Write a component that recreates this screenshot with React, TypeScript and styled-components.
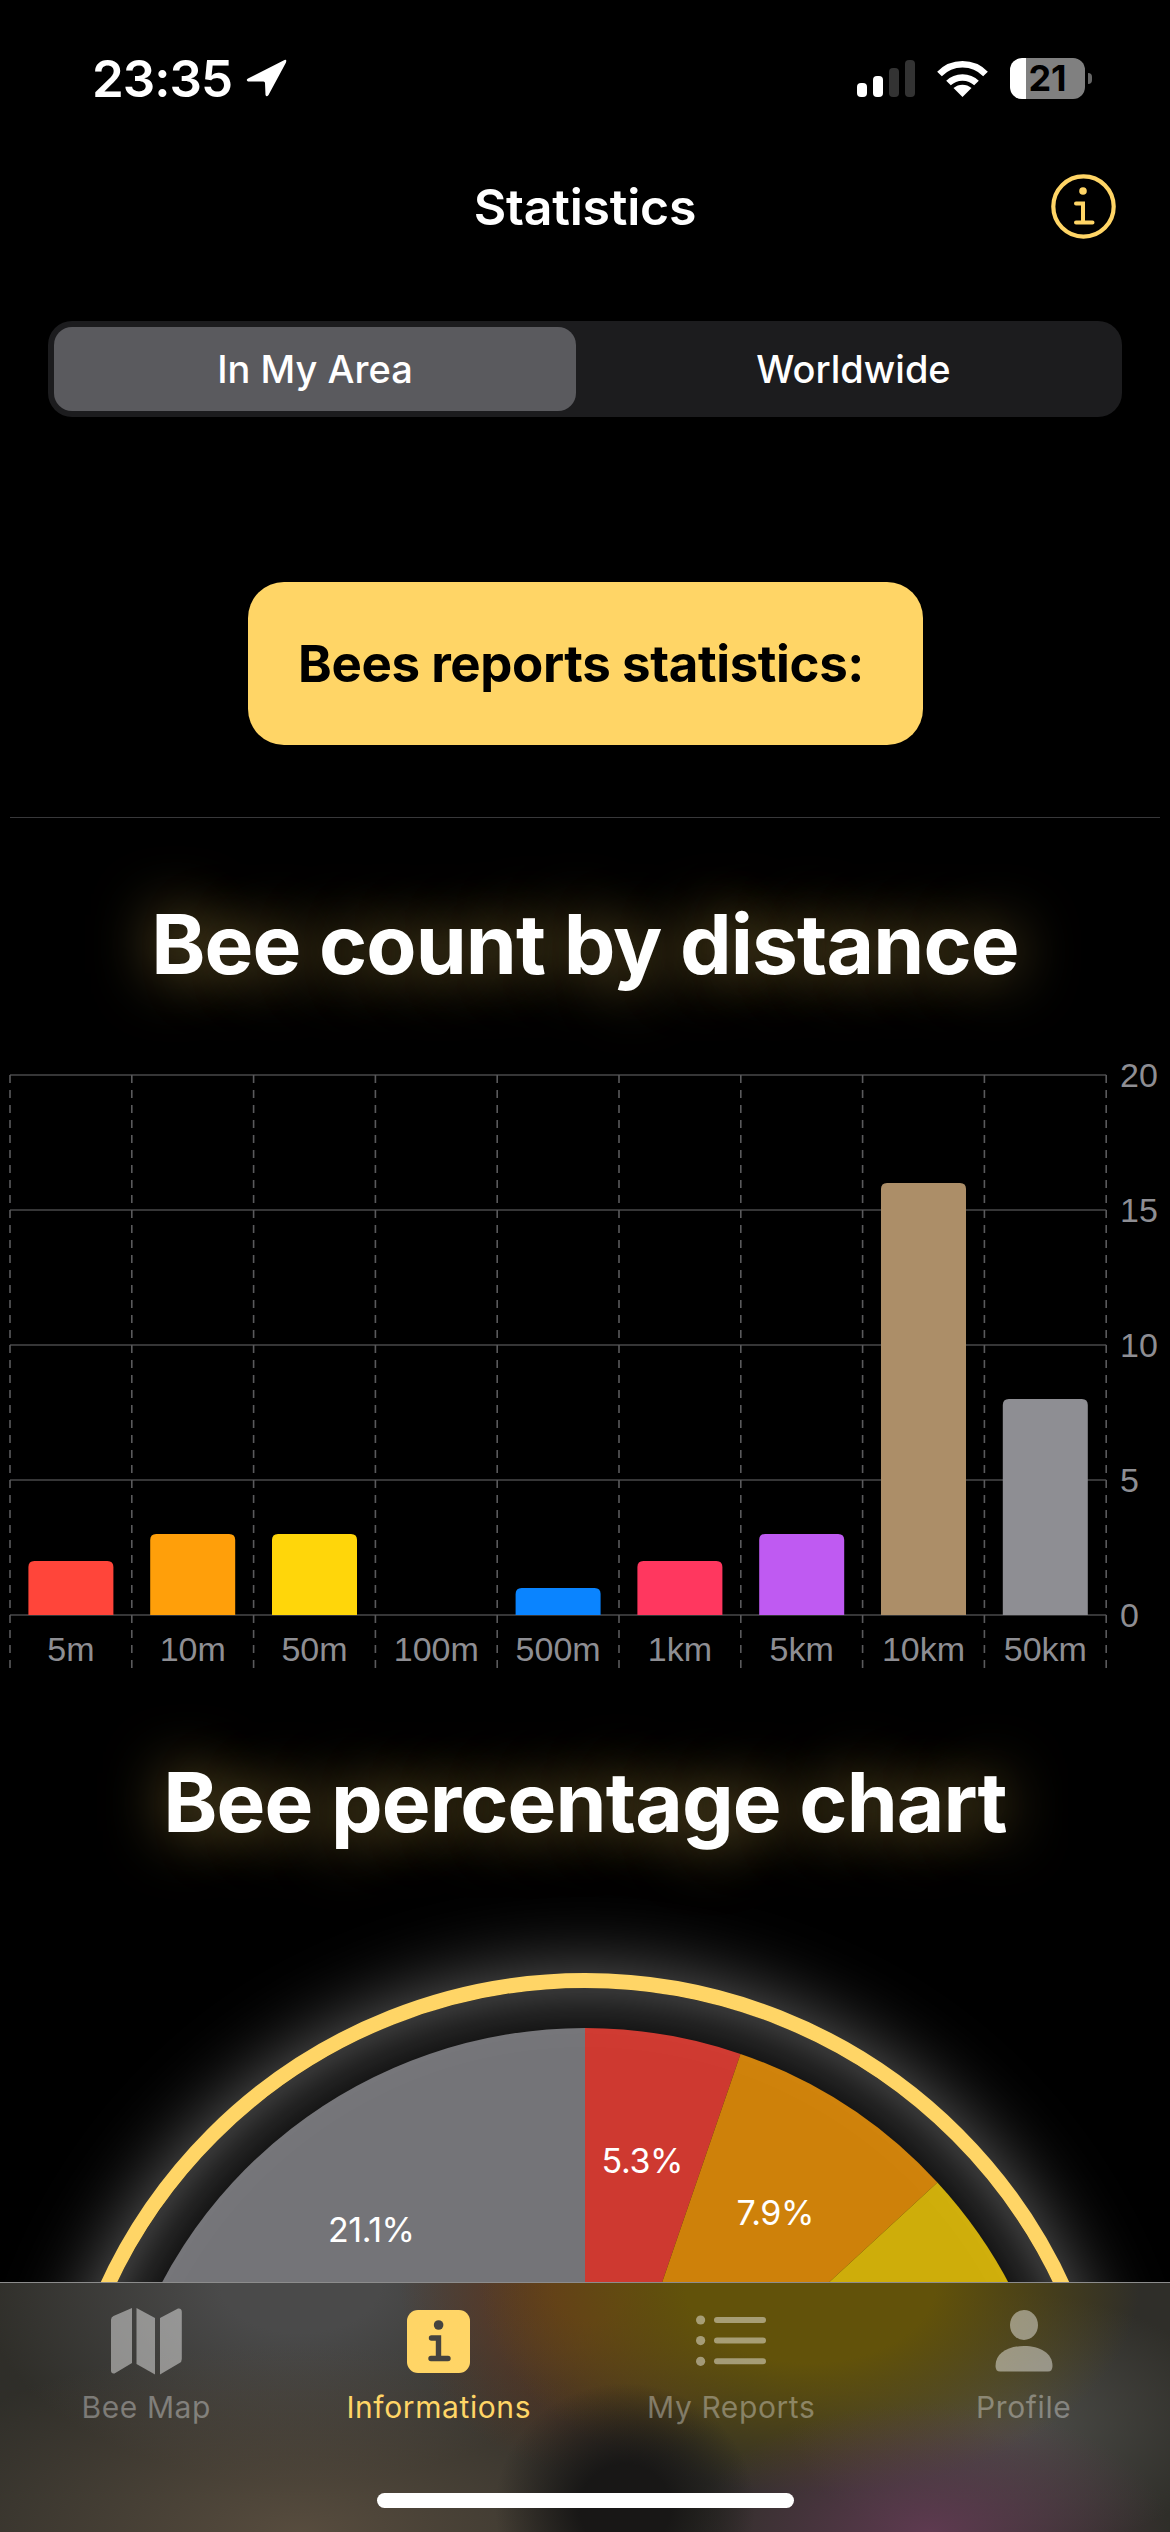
import React, { FC } from 'react';
import styled, { createGlobalStyle } from 'styled-components';

const GlobalStyle = createGlobalStyle`
    html, body {
        margin: 0;
        padding: 0;
        background: #000;
    }
    body {
        font-family: Inter, "Noto Sans", sans-serif;
        -webkit-font-smoothing: antialiased;
    }
`;

const YELLOW = '#ffd566';

const REPORTS = [
    { label: '5m', count: 2, color: '#ff453a' },
    { label: '10m', count: 3, color: '#ff9f0a' },
    { label: '50m', count: 3, color: '#ffd60a' },
    { label: '100m', count: 0, color: '#30d158' },
    { label: '500m', count: 1, color: '#0a84ff' },
    { label: '1km', count: 2, color: '#ff375f' },
    { label: '5km', count: 3, color: '#bf5af2' },
    { label: '10km', count: 16, color: '#ac8e68' },
    { label: '50km', count: 8, color: '#8e8e93' },
];

const Page = styled.div`
    position: relative;
    width: 1170px;
    height: 2532px;
    overflow: hidden;
    background: #000;
    color: #fff;
`;

const StatusBar = styled.div`
    height: 156px;
    display: flex;
    align-items: center;
    justify-content: space-between;
    padding: 0 85px 0 92px;
    box-sizing: border-box;
`;

const StatusGroup = styled.div<{ $gap: number }>`
    display: flex;
    align-items: center;
    gap: ${(p) => p.$gap}px;
`;

const Clock = styled.span`
    font-size: 51px;
    font-weight: 600;
    letter-spacing: -1px;
    line-height: 1;
`;

const Battery = styled.div`
    position: relative;
    width: 75px;
    height: 41px;
    border-radius: 12px;
    background: linear-gradient(to right, #fff 16px, #808080 16px);
    color: #000;
    font-size: 36px;
    font-weight: 700;
    line-height: 41px;
    text-align: center;

    &::after {
        content: '';
        position: absolute;
        left: 78px;
        top: 15px;
        width: 4px;
        height: 11px;
        border-radius: 0 4px 4px 0;
        background: #666;
    }
`;

const Header = styled.div`
    position: relative;
    height: 102px;
    display: flex;
    align-items: center;
    justify-content: center;
`;

const HeaderTitle = styled.h1`
    margin: 0;
    font-size: 50px;
    font-weight: 600;
    letter-spacing: -0.2px;
`;

const InfoButton = styled.svg`
    position: absolute;
    left: 1051px;
    top: 18px;
`;

const Segment = styled.div`
    margin: 63px 48px 0;
    height: 96px;
    display: grid;
    grid-template-columns: 1fr 1fr;
    border-radius: 24px;
    background: #1c1c1e;
`;

const SegmentOption = styled.div<{ $active?: boolean }>`
    display: flex;
    align-items: center;
    justify-content: center;
    margin: ${(p) => (p.$active ? '6px 9px 6px 6px' : '0')};
    border-radius: 18px;
    background: ${(p) => (p.$active ? '#5a5a5e' : 'transparent')};
    font-size: 38px;
    font-weight: 500;
`;

const Banner = styled.div`
    width: 675px;
    height: 163px;
    margin: 165px auto 0;
    padding-right: 8px;
    box-sizing: border-box;
    display: flex;
    align-items: center;
    justify-content: center;
    border-radius: 36px;
    background: ${YELLOW};
    color: #000;
    font-size: 51px;
    font-weight: 700;
    letter-spacing: -0.4px;
`;

const Divider = styled.div`
    height: 1px;
    margin: 72px 10px 1px;
    background: #38383a;
`;

const GlowTitle = styled.h2<{ $top: number }>`
    margin: ${(p) => p.$top}px 0 0;
    height: 100px;
    line-height: 100px;
    text-align: center;
    font-size: 82px;
    font-weight: 700;
    letter-spacing: -0.9px;
    text-shadow: 0 0 60px rgba(255, 213, 102, 0.55);
`;

const ChartSvg = styled.svg`
    display: block;
    margin-top: 55px;
`;

const AxisLabel = styled.text`
    fill: #8e8e93;
    font-family: "Liberation Sans", Arial, sans-serif;
    font-size: 34px;
`;

const Ring = styled.div`
    width: 1068px;
    height: 1068px;
    margin: 120px auto 0;
    box-sizing: border-box;
    display: flex;
    align-items: center;
    justify-content: center;
    border: 15px solid ${YELLOW};
    border-radius: 50%;
    background: #0c0c0c;
    box-shadow:
        0 0 80px rgba(255, 255, 255, 0.4),
        inset 0 0 70px rgba(255, 255, 255, 0.36);
`;

const PieValue = styled.text`
    fill: #fff;
    font-size: 34px;
    letter-spacing: -0.4px;
    text-anchor: middle;
    dominant-baseline: central;
`;

const TabBar = styled.nav`
    position: absolute;
    left: 0;
    right: 0;
    bottom: 0;
    height: 250px;
    display: grid;
    grid-template-columns: repeat(4, 1fr);
    border-top: 1px solid #8c8c8c;
    box-sizing: border-box;
    /* the blurred pie that sits under the bar */
    background:
        radial-gradient(ellipse 130px 125px at 625px 225px, #181716 35%, rgba(24, 23, 22, 0) 100%),
        radial-gradient(ellipse 240px 130px at 930px 250px, #5e3a50 0%, rgba(94, 58, 80, 0) 100%),
        radial-gradient(ellipse 330px 210px at 810px 0, #62520a 38%, rgba(98, 82, 10, 0) 100%),
        radial-gradient(ellipse 190px 190px at 590px 0, #64391f 20%, rgba(100, 57, 31, 0) 100%),
        radial-gradient(ellipse 420px 190px at 300px 250px, #574c3e 0%, rgba(87, 76, 62, 0) 100%),
        radial-gradient(ellipse 320px 200px at 300px 0, #4a4a4a 25%, rgba(74, 74, 74, 0) 100%),
        radial-gradient(ellipse 220px 130px at 1010px 140px, #4a4a46 10%, rgba(74, 74, 70, 0) 100%),
        #2f2e29;
`;

const Tab = styled.div<{ $active?: boolean }>`
    display: flex;
    flex-direction: column;
    align-items: center;
    color: ${(p) => (p.$active ? YELLOW : 'rgba(255, 255, 255, 0.34)')};
`;

const TabIcon = styled.div`
    height: 68px;
    margin-top: 24px;
    display: flex;
    align-items: center;
    justify-content: center;
`;

const TabLabel = styled.span`
    margin-top: 12px;
    font-size: 30px;
    font-weight: 400;
    line-height: 40px;
    letter-spacing: 0.6px;
`;

const HomeIndicator = styled.div`
    position: absolute;
    left: 377px;
    top: 210px;
    width: 417px;
    height: 15px;
    border-radius: 8px;
    background: #fff;
`;

const IconFill = styled.g`
    fill: rgba(255, 255, 255, 0.44);
`;

const LocationArrow: FC = () => (
    <svg width="41" height="38" viewBox="0 0 41 38">
        <path
            d="M38.5 1 L2 19.5 Q-.5 21 2 22.5 L17.5 22.5 Q19 22.5 19 24 L19.5 36 Q20.5 38.5 22.5 36 L40 3.5 Q41 0 38.5 1 Z"
            fill="#fff"
        />
    </svg>
);

const SignalIcon: FC = () => (
    <svg width="58" height="37" viewBox="0 0 58 37">
        <rect x="0" y="23" width="10" height="14" rx="4" fill="#fff" />
        <rect x="16" y="16" width="10" height="21" rx="4" fill="#fff" />
        <rect x="32" y="8" width="10" height="29" rx="4" fill="#333" />
        <rect x="48" y="0" width="10" height="37" rx="4" fill="#333" />
    </svg>
);

const WifiIcon: FC = () => (
    <svg width="51" height="37" viewBox="0 0 51 37" fill="none">
        <path d="M2.5 14 C15 1 36 1 48.5 14" stroke="#fff" strokeWidth="6.5" />
        <path d="M11.5 23 C19 15.5 32 15.5 39.5 23" stroke="#fff" strokeWidth="6.5" />
        <path d="M25.5 37 L16.5 28 C21.5 23.5 29.5 23.5 34.5 28 Z" fill="#fff" />
    </svg>
);

const HeaderInfoIcon: FC = () => (
    <InfoButton width="65" height="65" viewBox="0 0 65 65" fill="none" stroke={YELLOW}>
        <circle cx="32.5" cy="32.5" r="30.2" strokeWidth="4.2" />
        <circle cx="32" cy="17" r="3.8" fill={YELLOW} stroke="none" />
        <path d="M25 29.5 H32 V48.5 M25 48.5 H41.5" strokeWidth="4" strokeLinecap="round" />
    </InfoButton>
);

const MapIcon: FC = () => (
    <svg width="72" height="68" viewBox="0 0 72 68">
        <IconFill>
            <path d="M1 13 Q1 10 3.5 9 L22 1 L22 56 L4.5 66.5 Q1 67 1 63.5 Z" />
            <path d="M26.5 1 L45 11 L45 67.5 L26.5 57 Z" />
            <path d="M50 11 L68 1.5 Q71.8 1 71.8 5 L71.8 52 Q71.8 55 69.5 56 L50 67.5 Z" />
        </IconFill>
    </svg>
);

const InfoTileIcon: FC = () => (
    <svg width="63" height="63" viewBox="0 0 63 63">
        <rect width="63" height="63" rx="11" fill={YELLOW} />
        <circle cx="31.6" cy="15" r="4.8" fill="#45433f" />
        <path d="M24.5 28 H31.5 V48.5 M24 48.5 H41" fill="none" stroke="#45433f" strokeWidth="5.4" strokeLinecap="round" />
    </svg>
);

const ReportsIcon: FC = () => (
    <svg width="70" height="56" viewBox="0 0 70 56">
        <IconFill>
            {[7, 27.6, 48.3].map((y) => (
                <React.Fragment key={y}>
                    <circle cx="4.6" cy={y} r="4.6" />
                    <rect x="18" y={y - 3} width="52" height="6" rx="3" />
                </React.Fragment>
            ))}
        </IconFill>
    </svg>
);

const ProfileIcon: FC = () => (
    <svg width="58" height="62" viewBox="0 0 58 62">
        <IconFill>
            <ellipse cx="29" cy="15" rx="14" ry="15" />
            <path d="M0.5 56 C0.5 43 13 36 29 36 C45 36 57.5 43 57.5 56 Q57.5 61.5 53 61.5 L5 61.5 Q0.5 61.5 0.5 56 Z" />
        </IconFill>
    </svg>
);

const BarChart: FC = () => {
    const left = 10;
    const step = 121.8;
    const top = 25;
    const unit = 27;
    const bottom = top + unit * 20;

    return (
        <ChartSvg width="1170" height="630" viewBox="0 0 1170 630">
            {[0, 5, 10, 15, 20].map((v) => {
                const y = bottom - v * unit;
                return (
                    <g key={v}>
                        <line x1={left} x2={left + step * 9} y1={y} y2={y} stroke="#48484a" strokeWidth="1.6" />
                        <AxisLabel x="1120" y={y + 12}>
                            {v}
                        </AxisLabel>
                    </g>
                );
            })}
            {Array.from({ length: 10 }, (_, i) => (
                <line
                    key={i}
                    x1={left + step * i}
                    x2={left + step * i}
                    y1={top}
                    y2={619}
                    stroke="#5a5a5c"
                    strokeWidth="1.6"
                    strokeDasharray="8 7"
                />
            ))}
            {REPORTS.map((r, i) => {
                const x = left + step * i + 18.4;
                const h = r.count * unit;
                return (
                    <g key={r.label}>
                        {h > 0 && (
                            <path
                                d={`M${x} ${bottom} V${bottom - h + 6} Q${x} ${bottom - h} ${x + 6} ${bottom - h} H${x + 79} Q${x + 85} ${bottom - h} ${x + 85} ${bottom - h + 6} V${bottom} Z`}
                                fill={r.color}
                            />
                        )}
                        <AxisLabel x={left + step * i + step / 2} y="611" textAnchor="middle">
                            {r.label}
                        </AxisLabel>
                    </g>
                );
            })}
        </ChartSvg>
    );
};

const PieChart: FC = () => {
    const size = 958;
    const radius = 479;
    const labelRadius = 348;
    const tabBarTop = 253; // where the tab bar starts, seen from the top of the pie
    const total = REPORTS.reduce((sum, r) => sum + r.count, 0);
    const point = (turn: number) => {
        const a = turn * Math.PI * 2;
        return `${radius + radius * Math.sin(a)} ${radius - radius * Math.cos(a)}`;
    };

    let start = 0;
    const slices = REPORTS.filter((r) => r.count > 0).map((r) => {
        const share = r.count / total;
        const end = start + share;
        const slice = {
            ...r,
            share,
            d: `M${radius} ${radius} L${point(start)} A${radius} ${radius} 0 ${share > 0.5 ? 1 : 0} 1 ${point(end)} Z`,
            labelX: radius + labelRadius * Math.sin((start + share / 2) * Math.PI * 2),
            labelY: radius - labelRadius * Math.cos((start + share / 2) * Math.PI * 2) - 3,
        };
        start = end;
        return slice;
    });

    return (
        <svg width={size} height={size} viewBox={`0 0 ${size} ${size}`}>
            {slices.map((s) => (
                <path key={s.label} d={s.d} fill={s.color} fillOpacity="0.8" />
            ))}
            {slices
                .filter((s) => s.labelY < tabBarTop)
                .map((s) => (
                    <PieValue key={s.label} x={s.labelX} y={s.labelY}>
                        {(s.share * 100).toFixed(1)}%
                    </PieValue>
                ))}
        </svg>
    );
};

export default function App() {
    return (
        <Page>
            <GlobalStyle />
            <StatusBar>
                <StatusGroup $gap={14}>
                    <Clock>23:35</Clock>
                    <LocationArrow />
                </StatusGroup>
                <StatusGroup $gap={22}>
                    <SignalIcon />
                    <WifiIcon />
                    <Battery>21</Battery>
                </StatusGroup>
            </StatusBar>
            <Header>
                <HeaderTitle>Statistics</HeaderTitle>
                <HeaderInfoIcon />
            </Header>
            <Segment>
                <SegmentOption $active>In My Area</SegmentOption>
                <SegmentOption>Worldwide</SegmentOption>
            </Segment>
            <Banner>Bees reports statistics:</Banner>
            <Divider />
            <GlowTitle $top={77}>Bee count by distance</GlowTitle>
            <BarChart />
            <GlowTitle $top={73}>Bee percentage chart</GlowTitle>
            <Ring>
                <PieChart />
            </Ring>
            <TabBar>
                <Tab>
                    <TabIcon>
                        <MapIcon />
                    </TabIcon>
                    <TabLabel>Bee Map</TabLabel>
                </Tab>
                <Tab $active>
                    <TabIcon>
                        <InfoTileIcon />
                    </TabIcon>
                    <TabLabel>Informations</TabLabel>
                </Tab>
                <Tab>
                    <TabIcon>
                        <ReportsIcon />
                    </TabIcon>
                    <TabLabel>My Reports</TabLabel>
                </Tab>
                <Tab>
                    <TabIcon>
                        <ProfileIcon />
                    </TabIcon>
                    <TabLabel>Profile</TabLabel>
                </Tab>
                <HomeIndicator />
            </TabBar>
        </Page>
    );
}
